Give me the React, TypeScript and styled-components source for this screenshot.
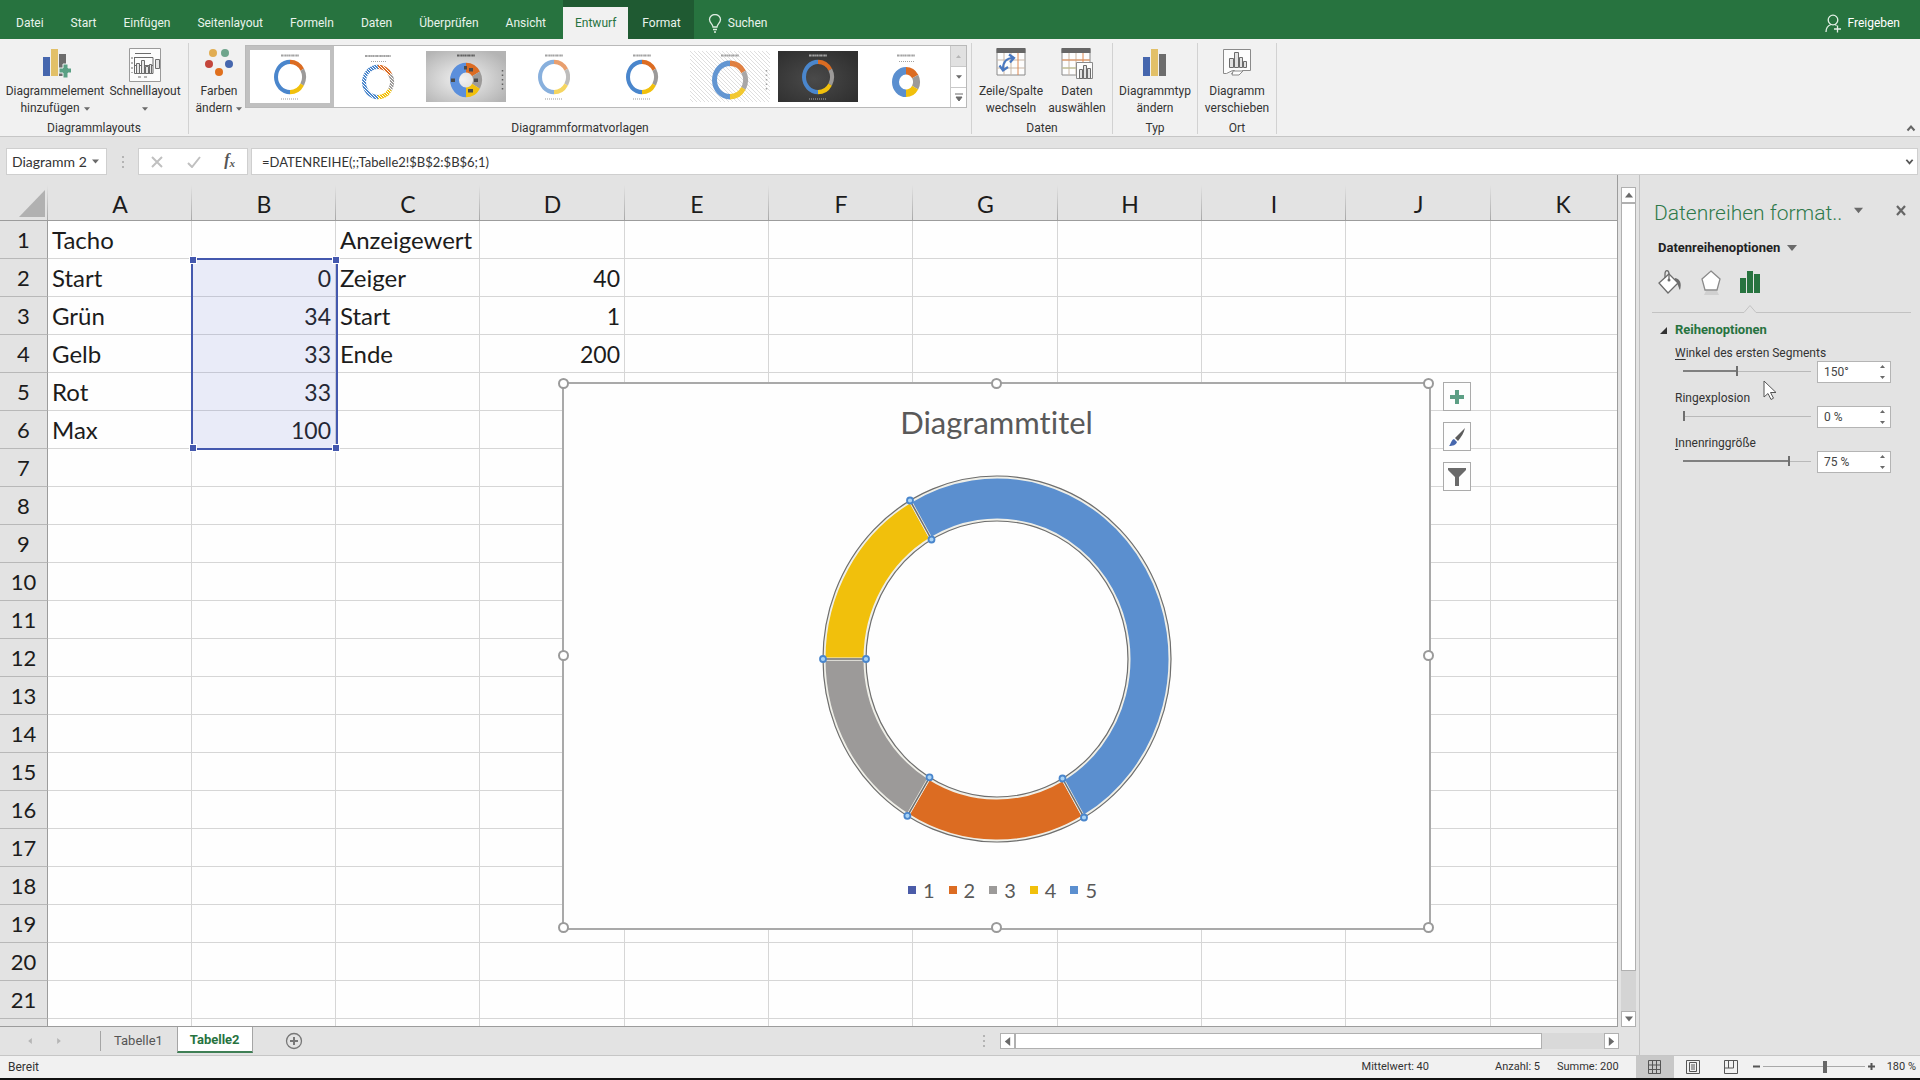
import React, { useState } from 'react';
import styled, { createGlobalStyle, css } from 'styled-components';

const UI_FONT = `Roboto, "Open Sans", "Liberation Sans", sans-serif`;
const SHEET_FONT = `Lato, "Open Sans", "Liberation Sans", sans-serif`;

const color = {
  green: '#27733f',
  greenDark: '#1f5a32',
  ribbon: '#f1f1f1',
  chrome: '#e3e3e3',
  line: '#c6c6c6',
  lineDark: '#9c9c9c',
  grid: '#d6d6d6',
  text: '#333333',
  blue: '#5b8fcf',
  orange: '#dc6c22',
  grey: '#9c9a99',
  yellow: '#f1c00c',
  navy: '#4a5ba8',
};

const GlobalStyle = createGlobalStyle`
  * { box-sizing: border-box; }
  body { margin: 0; background: ${color.chrome}; }
  button, input { font: inherit; color: inherit; margin: 0; padding: 0; border: 0; background: none; border-radius: 0; outline: none; }
  svg { display: block; flex: none; }
`;

const Window = styled.div`
  display: flex;
  flex-direction: column;
  height: 100vh;
  min-height: 600px;
  font-family: ${UI_FONT};
  font-size: 12px;
  line-height: 16px;
  font-variant-ligatures: none;
  color: ${color.text};
  overflow: hidden;
`;

/* ---------- tab bar ---------- */
const TabBar = styled.header`
  display: flex;
  height: 39px;
  flex: none;
  background: ${color.green};
  color: #e9f3ec;
`;
const Tabs = styled.nav`
  display: flex;
  padding: 0 4px 0 2px;
`;
const Tab = styled.button<{ $active?: boolean }>`
  margin-top: 7px;
  padding: 0 13px 0 14px;
  ${p => p.$active && css`background: ${color.ribbon}; color: ${color.green}; padding: 0 12px;`}
`;
const ContextTabs = styled.div`
  display: flex;
  background: ${color.greenDark};
`;
const BarAction = styled.button<{ $right?: boolean }>`
  display: flex;
  align-items: center;
  gap: 6px;
  margin-top: 7px;
  padding: 0 20px 0 14px;
  ${p => p.$right && css`margin-left: auto; color: #ffffff;`}
`;

/* ---------- ribbon ---------- */
const Ribbon = styled.section`
  display: flex;
  flex: none;
  height: 98px;
  padding-top: 4px;
  background: ${color.ribbon};
  border-bottom: 1px solid ${color.line};
`;
const Group = styled.div`
  display: flex;
  flex-direction: column;
  justify-content: space-between;
  height: 91px;
  border-right: 1px solid #d2d2d2;
`;
const GroupBody = styled.div`
  display: flex;
  justify-content: center;
  padding: 0 4px;
`;
const GroupLabel = styled.div`
  text-align: center;
  height: 14px;
  line-height: 16px;
`;
const BigButton = styled.button<{ $width: number }>`
  display: flex;
  flex-direction: column;
  align-items: center;
  width: ${p => p.$width}px;
  padding-top: 5px;
  line-height: 17px;
  white-space: nowrap;
`;
const IconSlot = styled.span`
  display: flex;
  justify-content: center;
  height: 35px;
`;
const ButtonLine = styled.span`
  display: flex;
  align-items: center;
  justify-content: center;
  gap: 4px;
  height: 17px;
`;
const Gallery = styled.div`
  display: flex;
  height: 63px;
  margin-top: 2px;
  border: 1px solid #b9b9b9;
  background: #ffffff;
`;
const StyleItem = styled.button<{ $selected?: boolean }>`
  display: flex;
  align-items: center;
  justify-content: center;
  width: 88px;
  border: 4px solid ${p => (p.$selected ? '#c0c0c0' : 'transparent')};
`;
const GalleryNav = styled.div`
  display: grid;
  grid-template-rows: repeat(3, 1fr);
  width: 16px;
  border-left: 1px solid #c9c9c9;
`;
const NavButton = styled.button<{ $off?: boolean }>`
  display: flex;
  align-items: center;
  justify-content: center;
  background: ${p => (p.$off ? '#e1e1e1' : '#ffffff')};
  & + & { border-top: 1px solid #c9c9c9; }
`;
const RibbonEnd = styled.div`
  display: flex;
  align-items: flex-end;
  margin-left: auto;
  padding: 0 4px 4px 0;
`;

/* ---------- formula bar ---------- */
const FormulaBar = styled.section`
  display: flex;
  flex: none;
  height: 38px;
  padding: 11px 2px 0 6px;
  background: ${color.chrome};
  font-family: ${SHEET_FONT};
  font-size: 14px;
`;
const Field = styled.div`
  display: flex;
  align-items: center;
  height: 27px;
  background: #ffffff;
  border: 1px solid #cfcfcf;
`;
const NameBox = styled(Field)`
  width: 101px;
  padding: 0 6px 0 5px;
  input { width: 80px; }
`;
const Dots = styled.span`
  display: flex;
  flex-direction: column;
  justify-content: center;
  align-items: center;
  gap: 3px;
  width: 31px;
  &::before, &::after, i { content: ''; width: 2px; height: 2px; background: #b4b4b4; }
`;
const EntryButtons = styled(Field)`
  width: 110px;
  justify-content: space-between;
  padding: 0 12px;
`;
const FxButton = styled.button`
  font-family: "Liberation Serif", serif;
  font-style: italic;
  font-weight: 700;
  font-size: 16px;
  color: #555555;
  sub { font-size: 11px; vertical-align: -2px; }
`;
const FormulaField = styled(Field)`
  flex: 1;
  margin-left: 3px;
  padding: 0 3px 0 10px;
  font-size: 13px;
  input { flex: 1; }
`;

/* ---------- workspace ---------- */
const Workspace = styled.main`
  display: flex;
  flex: 1;
  min-height: 0;
  background: ${color.chrome};
`;
const Book = styled.div`
  display: flex;
  flex-direction: column;
  flex: 1;
  min-width: 0;
`;
const BookTop = styled.div`
  display: flex;
  flex: 1;
  min-height: 0;
`;
const Sheet = styled.div`
  position: relative;
  flex: 1;
  min-width: 0;
  overflow: hidden;
  border-right: 1px solid ${color.lineDark};
  border-bottom: 1px solid ${color.lineDark};
`;
const Grid = styled.table`
  width: 100%;
  min-width: 1635px;
  table-layout: fixed;
  border-collapse: separate;
  border-spacing: 0;
  font-family: ${SHEET_FONT};
  font-size: 23px;
  line-height: 30px;
  color: #1c1c1c;
  thead th {
    height: 46px;
    padding: 12px 0 0;
    border-bottom: 1px solid ${color.lineDark};
    background:
      linear-gradient(to bottom, transparent 10px, #a8a8a8) right / 1px 100% no-repeat,
      ${color.chrome};
  }
  th { font-weight: 400; text-align: center; }
  tbody th {
    height: 38px;
    padding: 1px 0 0;
    font-size: 22px;
    background: ${color.chrome};
    border-right: 1px solid ${color.lineDark};
    border-bottom: 1px solid #b8b8b8;
  }
`;
const Cell = styled.td<{ $num?: boolean }>`
  height: 38px;
  padding: 1px 4px 0;
  background: #fefefe;
  border-right: 1px solid ${color.grid};
  border-bottom: 1px solid ${color.grid};
  font-size: ${p => (p.$num ? 23 : 24)}px;
  text-align: ${p => (p.$num ? 'right' : 'left')};
  white-space: nowrap;
`;
const Corner = styled.svg`
  margin: 0 3px 0 auto;
`;
const RangeMark = styled.div`
  position: absolute;
  left: 191px;
  top: 83px;
  width: 147px;
  height: 192px;
  border: 2px solid #4458ae;
  background: rgba(90, 110, 210, 0.13);
`;
const Knob = styled.i<{ $x: string; $y: string }>`
  position: absolute;
  left: ${p => p.$x};
  top: ${p => p.$y};
  width: 6px;
  height: 6px;
  margin: -3px 0 0 -3px;
  background: #4458ae;
  outline: 1px solid #ffffff;
`;

/* ---------- chart object ---------- */
const ChartObject = styled.figure`
  position: absolute;
  left: 562px;
  top: 207px;
  width: 869px;
  height: 548px;
  margin: 0;
  padding-top: 17px;
  display: flex;
  flex-direction: column;
  align-items: center;
  background: #fefefe;
  border: 2px solid #a9a9a9;
  font-family: ${SHEET_FONT};
  color: #595959;
`;
const ChartTitle = styled.figcaption`
  height: 42px;
  font-size: 31px;
  line-height: 42px;
`;
const ChartPlot = styled.svg`
  margin-top: 27px;
`;
const Legend = styled.ul`
  display: flex;
  gap: 14px;
  margin: 28px 0 0;
  padding: 0 0 0 12px;
  list-style: none;
  font-size: 20px;
  line-height: 28px;
`;
const LegendItem = styled.li<{ $color: string }>`
  display: flex;
  align-items: center;
  gap: 7px;
  &::before { content: ''; width: 8px; height: 8px; background: ${p => p.$color}; }
`;
const Handle = styled.i<{ $x: string; $y: string }>`
  position: absolute;
  left: ${p => p.$x};
  top: ${p => p.$y};
  width: 11px;
  height: 11px;
  margin: -6px 0 0 -6px;
  border: 2px solid #9a9a9a;
  border-radius: 50%;
  background: #ffffff;
`;
const ChartTools = styled.div`
  position: absolute;
  left: 1443px;
  top: 207px;
  display: grid;
  gap: 11px;
`;
const ChartTool = styled.button`
  display: flex;
  align-items: center;
  justify-content: center;
  width: 28px;
  height: 29px;
  background: #fefefe;
  border: 1px solid #ababab;
`;

/* ---------- scroll bars ---------- */
const VScroll = styled.div`
  display: flex;
  flex-direction: column;
  width: 15px;
  margin: 12px 3px 0;
  background: #d4d4d4;
`;
const ScrollButton = styled.button`
  display: flex;
  align-items: center;
  justify-content: center;
  width: 15px;
  height: 16px;
  flex: none;
  background: #ffffff;
  border: 1px solid #b0b0b0;
`;
const Thumb = styled.div<{ $share: number }>`
  flex: ${p => p.$share};
  background: #ffffff;
  border: 1px solid #b0b0b0;
`;
const Rest = styled.div<{ $share: number }>`
  flex: ${p => p.$share};
`;
const SheetBar = styled.div`
  display: flex;
  align-items: center;
  height: 28px;
  flex: none;
`;
const SheetNav = styled.div`
  display: flex;
  align-items: center;
  gap: 23px;
  width: 101px;
  height: 20px;
  padding-left: 27px;
  border-right: 1px solid #a5a5a5;
`;
const SheetTab = styled.button<{ $active?: boolean }>`
  height: 24px;
  padding: 0 14px 0 13px;
  font-size: 13px;
  color: #555555;
  ${p => p.$active && css`
    align-self: flex-start;
    height: 27px;
    margin-top: -1px;
    padding: 3px 12px 0;
    color: ${color.green};
    font-weight: 700;
    background: #ffffff;
    border: 1px solid #a5a5a5;
    border-width: 0 1px;
    border-bottom: 2px solid #3f7f55;
  `}
`;
const AddSheet = styled.button`
  margin-left: 32px;
`;
const HScroll = styled.div`
  display: flex;
  width: 619px;
  height: 16px;
  margin-left: auto;
  margin-right: 20px;
  background: #d9d9d9;
`;
const ScrollGrip = styled(Dots)`
  width: 32px;
  margin-left: auto;
  & + ${HScroll} { margin-left: 0; }
`;

/* ---------- format pane ---------- */
const Pane = styled.aside`
  position: relative;
  display: flex;
  flex-direction: column;
  width: 281px;
  flex: none;
  padding: 22px 9px 0 12px;
  border-left: 1px solid #c2c2c2;
`;
const PaneHead = styled.div`
  display: flex;
  align-items: center;
  height: 32px;
  padding-left: 2px;
`;
const PaneTitle = styled.h2`
  margin: 0;
  width: 200px;
  font-size: 21px;
  line-height: 32px;
  font-weight: 300;
  color: #2f7a4b;
  white-space: nowrap;
`;
const CloseButton = styled.button`
  margin: 0 5px 6px auto;
`;
const TitleMenu = styled.button`
  margin-bottom: 6px;
`;
const OptionsMenu = styled.button`
  display: flex;
  align-items: center;
  gap: 7px;
  height: 16px;
  margin-top: 11px;
  padding-left: 6px;
  font-size: 13px;
  font-weight: 700;
  color: #222222;
`;
const PaneIcons = styled.div`
  display: flex;
  gap: 15px;
  height: 26px;
  margin-top: 13px;
  padding-left: 6px;
`;
const Notch = styled.svg`
  width: 100%;
  margin-top: 9px;
`;
const Section = styled.button`
  display: flex;
  align-items: center;
  gap: 8px;
  margin-top: 9px;
  padding-left: 8px;
  font-size: 13px;
  font-weight: 700;
  color: ${color.green};
`;
const Option = styled.div`
  height: 45px;
  padding-left: 23px;
  label { display: block; height: 15px; line-height: 15px; }
  u { text-underline-offset: 2px; }
`;
const OptionRow = styled.div`
  display: flex;
  align-items: flex-start;
  gap: 6px;
  padding-left: 8px;
`;
const Options = styled.div`
  margin-top: 8px;
`;
const Slider = styled.input<{ $fill: number }>`
  appearance: none;
  width: 128px;
  height: 20px;
  background:
    linear-gradient(#808080, #808080) left center / ${p => p.$fill}% 2px no-repeat,
    linear-gradient(#b9b9b9, #b9b9b9) left center / 100% 1px no-repeat;
  &::-webkit-slider-thumb {
    appearance: none;
    width: 2px;
    height: 10px;
    background: #6f6f6f;
  }
`;
const Spin = styled.div`
  display: flex;
  align-items: center;
  width: 74px;
  height: 22px;
  background: #ffffff;
  border: 1px solid #b4b4b4;
  input { width: 52px; padding-left: 6px; color: #444444; }
`;
const SpinButtons = styled.div`
  display: grid;
  gap: 6px;
  margin-left: auto;
  margin-right: 5px;
`;
const Pointer = styled.svg`
  position: absolute;
  left: 123px;
  top: 205px;
`;

/* ---------- status bar ---------- */
const StatusBar = styled.footer`
  display: flex;
  align-items: center;
  flex: none;
  height: 25px;
  padding: 0 4px 1px 8px;
  background: ${color.ribbon};
  border-top: 1px solid ${color.line};
  border-bottom: 2px solid #111111;
`;
const Stats = styled.div`
  display: flex;
  margin-left: auto;
  margin-right: 17px;
  gap: 17px;
  font-size: 11px;
  span:first-child { margin-right: 49px; }
`;
const ViewButton = styled.button<{ $on?: boolean }>`
  display: flex;
  align-items: center;
  justify-content: center;
  width: 38px;
  height: 22px;
  background: ${p => (p.$on ? '#c8c8c8' : 'transparent')};
`;
const ZoomArea = styled.div`
  display: flex;
  align-items: center;
  gap: 2px;
  margin-left: 2px;
`;
const ZoomSlider = styled(Slider)`
  width: 102px;
  background: linear-gradient(#a9a9a9, #a9a9a9) left center / 100% 1px no-repeat;
  &::-webkit-slider-thumb { width: 4px; height: 12px; background: #666666; }
`;
const ZoomValue = styled.button`
  margin-left: 9px;
  font-size: 11px;
`;

/* ---------- small drawings ---------- */
const Arrow = ({ dir = 'down', size = 7, fill = '#6a6a6a' }: { dir?: string; size?: number; fill?: string }) => {
  const d: Record<string, string> = {
    down: 'M0 2h10L5 8z',
    up: 'M0 8h10L5 2z',
    left: 'M8 0v10L2 5z',
    right: 'M2 0v10l6-5z',
  };
  return <svg width={size} height={size} viewBox="0 0 10 10"><path d={d[dir]} fill={fill} /></svg>;
};

const polar = (cx: number, cy: number, rx: number, ry: number, deg: number) => {
  const a = (deg * Math.PI) / 180;
  return [cx + rx * Math.sin(a), cy - ry * Math.cos(a)];
};
const ringPath = (cx: number, cy: number, R: number[], r: number[], from: number, to: number) => {
  const big = to - from > 180 ? 1 : 0;
  const [a, b] = polar(cx, cy, R[0], R[1], from);
  const [c, d] = polar(cx, cy, R[0], R[1], to);
  const [e, f] = polar(cx, cy, r[0], r[1], to);
  const [g, h] = polar(cx, cy, r[0], r[1], from);
  return `M${a} ${b}A${R[0]} ${R[1]} 0 ${big} 1 ${c} ${d}L${e} ${f}A${r[0]} ${r[1]} 0 ${big} 0 ${g} ${h}Z`;
};

const slices = [
  { from: 150, to: 211, fill: color.orange },
  { from: 211, to: 270, fill: color.grey },
  { from: 270, to: 330, fill: color.yellow },
  { from: 330, to: 510, fill: color.blue },
];

const Doughnut = () => {
  const cx = 180, cy = 189, R = [174, 183], r = [131, 138];
  return (
    <ChartPlot width="360" height="378" viewBox="0 0 360 378" role="img" aria-label="Ringdiagramm">
      {slices.map(s => (
        <path key={s.from} d={ringPath(cx, cy, [R[0] - 1, R[1] - 1], [r[0] + 1, r[1] + 1], s.from, s.to)} fill={s.fill} stroke="#efefe8" strokeWidth="3" />
      ))}
      <g fill="none" stroke="#6e6e6e" strokeWidth="1.200">
        <ellipse cx={cx} cy={cy} rx={R[0]} ry={R[1]} />
        <ellipse cx={cx} cy={cy} rx={r[0]} ry={r[1]} />
      </g>
      {slices.map(s => {
        const [x1, y1] = polar(cx, cy, R[0], R[1], s.from);
        const [x2, y2] = polar(cx, cy, r[0], r[1], s.from);
        return (
          <g key={s.from} stroke="#4a86cc" strokeWidth="1.800" fill="#a9d3f5">
            <path d={`M${x1} ${y1}L${x2} ${y2}`} stroke="#6e6e6e" strokeWidth="1.500" />
            <circle cx={x1} cy={y1} r="3" />
            <circle cx={x2} cy={y2} r="3" />
          </g>
        );
      })}
    </ChartPlot>
  );
};

const thumbColors = [color.orange, color.grey, color.yellow, '#4a86cc'];
const thumbAngles = [[0, 61], [61, 120], [120, 180], [180, 360]];
type ThumbProps = { id: string; bg?: string; R?: number; r?: number; cy?: number; opacity?: number; hatch?: boolean; lines?: boolean; side?: boolean; labels?: boolean; sub?: boolean; ink?: string; blue?: string; foot?: boolean; bold?: boolean };
const Thumbnail = ({ id, bg = '#ffffff', R = 16, r = 12, cy = 26, opacity = 1, hatch, lines, side, labels, sub, ink = '#a2a2a2', blue, foot, bold }: ThumbProps) => (
  <svg width="80" height="51" viewBox="0 0 80 51">
    <defs>
      <radialGradient id={`${id}-g`} cx="0.45" cy="0.55" r="0.65">
        <stop offset="0" stopColor={bg === 'silver' ? '#f2f2f2' : '#4a4a4a'} />
        <stop offset="1" stopColor={bg === 'silver' ? '#b4b4b4' : '#303030'} />
      </radialGradient>
      <pattern id={`${id}-l`} width="4" height="4" patternUnits="userSpaceOnUse">
        <path d="M-1 -1L5 5M-1 3L1 5M3 -1L5 1" stroke="#d6d6d6" strokeWidth="0.8" />
      </pattern>
      <pattern id={`${id}-h`} width="3" height="3" patternUnits="userSpaceOnUse">
        <path d="M-1 -1L4 4M-1 2L1 4M2 -1L4 1" stroke="#ffffff" strokeWidth="1" />
      </pattern>
    </defs>
    <rect width="80" height="51" fill={bg === '#ffffff' ? bg : `url(#${id}-g)`} />
    {lines && <rect width="80" height="51" fill={`url(#${id}-l)`} />}
    <path d={bold ? 'M27 5h26' : 'M31 4.500h18'} stroke={ink} strokeWidth="2.200" strokeDasharray="2 0.4 1 0.3" />
    {sub && <path d="M33 10.500h15" stroke={ink} strokeWidth="1" strokeDasharray="1 1" />}
    <g opacity={opacity}>
      {thumbAngles.map(([a, b], i) => (
        <path key={a} d={ringPath(40, cy, [R, R * 1.08], [r, r * 1.08], a, b)} fill={i === 3 && blue ? blue : thumbColors[i]} />
      ))}
      {hatch && <path d={ringPath(40, cy, [R, R * 1.08], [r, r * 1.08], 150, 359)} fill={`url(#${id}-h)`} />}
      {hatch && <path d={ringPath(40, cy, [R, R * 1.08], [r, r * 1.08], 0, 150)} fill={`url(#${id}-h)`} />}
    </g>
    {labels && <path d="M25 27.500h4v3.500h-4zM48 27.500h4v3.500h-4zM42 38h5v3.500h-5zM38 15h3v3.500h-3zM43 17h4v3.500h-4z" fill="#4b4b4b" />}
    {side && <path d="M76.500 19v20" stroke={ink} strokeWidth="1.500" strokeDasharray="1.500 3" />}
    {foot && <path d="M31 48h18" stroke={ink} strokeWidth="1.300" strokeDasharray="1 1" opacity="0.7" />}
  </svg>
);

const AddElementIcon = () => (
  <svg width="32" height="32" viewBox="0 0 32 32">
    <path d="M4 9h7v19H4z" fill="#4667ae" /><path d="M12 1h7v27h-7z" fill="#e2c068" /><path d="M20 6h7v22h-7z" fill="#6c6c6c" />
    <path d="M20 20h4v-4h5v4h4v5h-4v5h-5v-5h-4z" fill="#5aa084" stroke="#f1f1f1" />
  </svg>
);
const TypeIcon = () => (
  <svg width="32" height="32" viewBox="0 0 32 32">
    <path d="M4 9h7v19H4z" fill="#4667ae" /><path d="M12 1h7v27h-7z" fill="#e2c068" /><path d="M20 6h7v22h-7z" fill="#6c6c6c" />
  </svg>
);
const LayoutIcon = () => (
  <svg width="32" height="34" viewBox="0 0 32 34" fill="none" stroke="#6b6b6b">
    <path d="M.5.5h31v33H.5z" fill="#fcfcfc" stroke="#9a9a9a" /><path d="M6 5.500h16M9 29h3M15 29h3M28 12v8M3 9v2M3 14v2M3 19v2M3 24v1" />
    <path d="M5.500 9v16.500H24M6 9.500h18v16M6 17.500h18" /><path d="M7.500 15.500h3v10h-3zM12.500 12.500h3v13h-3zM16.500 18.500h3v7h-3zM20.500 16.500h2v9h-2zM26.500 11.500h4v9h-4z" fill="#e6e6e6" />
  </svg>
);
const ColorsIcon = () => (
  <svg width="32" height="32" viewBox="0 0 32 32">
    <circle cx="10" cy="5" r="4" fill="#e1ad52" /><circle cx="22" cy="5" r="4" fill="#6fa58c" /><circle cx="6" cy="16" r="4" fill="#c4463b" />
    <circle cx="26" cy="16" r="4" fill="#4667ae" /><circle cx="16" cy="24" r="4" fill="#e0701d" />
  </svg>
);
const TableLines = () => (
  <>
    <path d="M1 1h28v26H1z" fill="#fdfdfd" stroke="#8a8a8a" /><path d="M.5 0h29v5H.5z" fill="#666666" />
    <path d="M8 5v22M1 12h28M1 20h28M15 5v22" stroke="#c9b7a6" fill="none" /><path d="M22 5v22" stroke="#de8850" />
  </>
);
const SwitchIcon = () => (
  <svg width="30" height="32" viewBox="0 0 30 32">
    <TableLines />
    <path d="M7 21c0-7 4-11 10-11M13 6.500l5 3.500-4 4.500M3.500 17.500l3.500 5 5-3.500" fill="none" stroke="#4a78c0" strokeWidth="2.200" />
  </svg>
);
const SelectDataIcon = () => (
  <svg width="32" height="32" viewBox="0 0 32 32">
    <TableLines />
    <path d="M1 12h28" stroke="#de8850" /><path d="M1 20h28" stroke="#b9c08a" />
    <path d="M15.500 14.500h16v16h-16z" fill="#fcfcfc" stroke="#8a8a8a" /><path d="M18.500 21.500h3v9h-3zM22.500 17.500h3v13h-3zM26.500 20.500h3v10h-3z" fill="#e2e2e2" stroke="#6b6b6b" />
  </svg>
);
const MoveIcon = () => (
  <svg width="30" height="32" viewBox="0 0 30 32">
    <path d="M1.500 1.500h27v21h-8l-3 3h-8l3-3h-2l-6 3h-3z" fill="#fcfcfc" stroke="#8a8a8a" /><path d="M11 23h10l-4 4h-7z" fill="#fcfcfc" stroke="#8a8a8a" />
    <path d="M7.500 10.500h4v9h-4zM12.500 4.500h4v15h-4zM17.500 9.500h3v10h-3zM21.500 13.500h3v6h-3z" fill="#e2e2e2" stroke="#6b6b6b" />
  </svg>
);

/* ---------- data ---------- */
const columns = ['A', 'B', 'C', 'D', 'E', 'F', 'G', 'H', 'I', 'J', 'K'];
const columnWidths = [144, 144, 144, 145, 144, 144, 145, 144, 144, 145];
const cells: Record<number, (string | number)[]> = {
  1: ['Tacho', '', 'Anzeigewert', ''],
  2: ['Start', 0, 'Zeiger', 40],
  3: ['Grün', 34, 'Start', 1],
  4: ['Gelb', 33, 'Ende', 200],
  5: ['Rot', 33, '', ''],
  6: ['Max', 100, '', ''],
};
const rowNumbers = Array.from({ length: 21 }, (_, i) => i + 1);
const legend = [color.navy, color.orange, color.grey, color.yellow, color.blue];
const handles = [['0', '0'], ['50%', '0'], ['100%', '0'], ['0', '50%'], ['100%', '50%'], ['0', '100%'], ['50%', '100%'], ['100%', '100%']];
const corners = [['0', '0'], ['100%', '0'], ['0', '100%'], ['100%', '100%']];

const SliderOption = ({ id, first, rest, start, max, unit }: { id: string; first: string; rest: string; start: number; max: number; unit: string }) => {
  const [value, setValue] = useState(start);
  const step = (n: number) => setValue(v => Math.min(max, Math.max(0, v + n)));
  return (
    <Option>
      <label htmlFor={id}>{id === 'explosion' ? first : <u>{first}</u>}{rest}</label>
      <OptionRow>
        <Slider id={id} type="range" min={0} max={max} value={value} $fill={Math.round((value / max) * 100)} onChange={e => setValue(Number(e.target.value))} />
        <Spin>
          <input type="text" aria-label={first + rest} value={`${value}${unit}`} readOnly />
          <SpinButtons>
            <button aria-label="Erhöhen" onClick={() => step(1)}><Arrow dir="up" size={5} /></button>
            <button aria-label="Verringern" onClick={() => step(-1)}><Arrow size={5} /></button>
          </SpinButtons>
        </Spin>
      </OptionRow>
    </Option>
  );
};

export default function App() {
  return (
    <Window>
      <GlobalStyle />
      <TabBar>
        <Tabs>
          {['Datei', 'Start', 'Einfügen', 'Seitenlayout', 'Formeln', 'Daten', 'Überprüfen', 'Ansicht'].map(t => <Tab key={t}>{t}</Tab>)}
        </Tabs>
        <ContextTabs>
          <Tab $active>Entwurf</Tab>
          <Tab>Format</Tab>
        </ContextTabs>
        <BarAction>
          <svg width="14" height="19" viewBox="0 0 14 19" fill="none" stroke="#dcebe0" strokeWidth="1.300"><path d="M5 13c0-3-3.500-4-3.500-7.500a5.500 5 0 0 1 11 0C12.500 9 9 10 9 13zM5 15.500h4M6 18h2" /></svg>
          Suchen
        </BarAction>
        <BarAction $right>
          <svg width="16" height="19" viewBox="0 0 16 19" fill="none" stroke="#e4f0e7" strokeWidth="1.300"><circle cx="8" cy="6" r="4.800" /><path d="M1 18c0-4 2-6.500 5-7.500M10 10.500l1.500 1M12.500 11.500v7M9 15h7" /></svg>
          Freigeben
        </BarAction>
      </TabBar>

      <Ribbon>
        <Group>
          <GroupBody>
            <BigButton $width={102}>
              <IconSlot><AddElementIcon /></IconSlot>
              <ButtonLine>Diagrammelement</ButtonLine>
              <ButtonLine>hinzufügen <Arrow size={6} /></ButtonLine>
            </BigButton>
            <BigButton $width={78}>
              <IconSlot><LayoutIcon /></IconSlot>
              <ButtonLine>Schnelllayout</ButtonLine>
              <ButtonLine><Arrow size={6} /></ButtonLine>
            </BigButton>
          </GroupBody>
          <GroupLabel>Diagrammlayouts</GroupLabel>
        </Group>
        <Group>
          <GroupBody>
            <BigButton $width={52}>
              <IconSlot><ColorsIcon /></IconSlot>
              <ButtonLine>Farben</ButtonLine>
              <ButtonLine>ändern <Arrow size={6} /></ButtonLine>
            </BigButton>
            <Gallery>
              <StyleItem $selected aria-label="Formatvorlage 1"><Thumbnail id="t1" foot /></StyleItem>
              <StyleItem aria-label="Formatvorlage 2"><Thumbnail id="t2" hatch bold sub cy={31} /></StyleItem>
              <StyleItem aria-label="Formatvorlage 3"><Thumbnail id="t3" bg="silver" r={7} cy={29} labels side ink="#5f5f5f" blue="#5b8fdc" /></StyleItem>
              <StyleItem aria-label="Formatvorlage 4"><Thumbnail id="t4" opacity={0.65} foot /></StyleItem>
              <StyleItem aria-label="Formatvorlage 5"><Thumbnail id="t5" foot /></StyleItem>
              <StyleItem aria-label="Formatvorlage 6"><Thumbnail id="t6" lines side R={18} r={13} cy={29} opacity={0.85} /></StyleItem>
              <StyleItem aria-label="Formatvorlage 7"><Thumbnail id="t7" bg="dark" ink="#a5a5a5" foot /></StyleItem>
              <StyleItem aria-label="Formatvorlage 8"><Thumbnail id="t8" R={14} r={7} cy={31} sub blue="#5b8fcf" /></StyleItem>
              <GalleryNav>
                <NavButton $off aria-label="Nach oben"><Arrow dir="up" size={5} fill="#b5b5b5" /></NavButton>
                <NavButton aria-label="Nach unten"><Arrow size={6} /></NavButton>
                <NavButton aria-label="Mehr"><svg width="8" height="9" viewBox="0 0 8 9"><path d="M0 1h8M1 4h6L4 8z" fill="#6a6a6a" stroke="#6a6a6a" /></svg></NavButton>
              </GalleryNav>
            </Gallery>
          </GroupBody>
          <GroupLabel>Diagrammformatvorlagen</GroupLabel>
        </Group>
        <Group>
          <GroupBody>
            <BigButton $width={70}><IconSlot><SwitchIcon /></IconSlot><ButtonLine>Zeile/Spalte</ButtonLine><ButtonLine>wechseln</ButtonLine></BigButton>
            <BigButton $width={62}><IconSlot><SelectDataIcon /></IconSlot><ButtonLine>Daten</ButtonLine><ButtonLine>auswählen</ButtonLine></BigButton>
          </GroupBody>
          <GroupLabel>Daten</GroupLabel>
        </Group>
        <Group>
          <GroupBody>
            <BigButton $width={76}><IconSlot><TypeIcon /></IconSlot><ButtonLine>Diagrammtyp</ButtonLine><ButtonLine>ändern</ButtonLine></BigButton>
          </GroupBody>
          <GroupLabel>Typ</GroupLabel>
        </Group>
        <Group>
          <GroupBody>
            <BigButton $width={70}><IconSlot><MoveIcon /></IconSlot><ButtonLine>Diagramm</ButtonLine><ButtonLine>verschieben</ButtonLine></BigButton>
          </GroupBody>
          <GroupLabel>Ort</GroupLabel>
        </Group>
        <RibbonEnd>
          <button aria-label="Menüband reduzieren"><svg width="10" height="8" viewBox="0 0 10 8"><path d="M1.500 6.500L5 2.500l3.500 4" fill="none" stroke="#666666" strokeWidth="2" /></svg></button>
        </RibbonEnd>
      </Ribbon>

      <FormulaBar>
        <NameBox>
          <input aria-label="Namenfeld" defaultValue="Diagramm 2" />
          <Arrow size={7} />
        </NameBox>
        <Dots><i /></Dots>
        <EntryButtons>
          <button aria-label="Abbrechen"><svg width="12" height="12" viewBox="0 0 12 12"><path d="M1 1l10 10M11 1L1 11" stroke="#c0c0c0" strokeWidth="2" /></svg></button>
          <button aria-label="Eingeben"><svg width="14" height="12" viewBox="0 0 14 12"><path d="M1 7l4 4 8-10" fill="none" stroke="#c0c0c0" strokeWidth="2" /></svg></button>
          <FxButton aria-label="Funktion einfügen">f<sub>x</sub></FxButton>
        </EntryButtons>
        <FormulaField>
          <input aria-label="Formel" defaultValue="=DATENREIHE(;;Tabelle2!$B$2:$B$6;1)" />
          <svg width="9" height="8" viewBox="0 0 10 8"><path d="M1.500 1.500L5 5.500l3.500-4" fill="none" stroke="#555555" strokeWidth="2" /></svg>
        </FormulaField>
      </FormulaBar>

      <Workspace>
        <Book>
          <BookTop>
            <Sheet>
              <Grid>
                <colgroup>
                  <col width={48} />
                  {columnWidths.map((w, i) => <col key={i} width={w} />)}
                  <col />
                </colgroup>
                <thead>
                  <tr>
                    <th aria-label="Alles auswählen"><Corner width="26" height="27" viewBox="0 0 26 27"><path d="M26 0v27H0z" fill="#b1b1b1" /></Corner></th>
                    {columns.map(c => <th key={c} scope="col">{c}</th>)}
                  </tr>
                </thead>
                <tbody>
                  {rowNumbers.map(n => (
                    <tr key={n}>
                      <th scope="row">{n}</th>
                      {columns.map((c, i) => {
                        const v = cells[n]?.[i] ?? '';
                        return <Cell key={c} $num={typeof v === 'number'}>{v}</Cell>;
                      })}
                    </tr>
                  ))}
                  <tr>
                    <th />
                    {columns.map(c => <Cell key={c} />)}
                  </tr>
                </tbody>
              </Grid>
              <RangeMark>{corners.map(([x, y]) => <Knob key={x + y} $x={x} $y={y} />)}</RangeMark>
              <ChartObject>
                <ChartTitle>Diagrammtitel</ChartTitle>
                <Doughnut />
                <Legend>{legend.map((c, i) => <LegendItem key={c} $color={c}>{i + 1}</LegendItem>)}</Legend>
                {handles.map(([x, y]) => <Handle key={x + y} $x={x} $y={y} />)}
              </ChartObject>
              <ChartTools>
                <ChartTool aria-label="Diagrammelemente"><svg width="14" height="14" viewBox="0 0 14 14"><path d="M5 0h4v5h5v4H9v5H5V9H0V5h5z" fill="#5d9f85" /></svg></ChartTool>
                <ChartTool aria-label="Diagrammformatvorlagen"><svg width="18" height="20" viewBox="0 0 18 20"><path d="M17 1L7 11l3 3c3-4 6-8 7-13z" fill="#5c5c5c" /><path d="M6 12l3 3c-1 3-4 4-8 4 2-2 2-6 5-7z" fill="#4667ae" /></svg></ChartTool>
                <ChartTool aria-label="Diagrammfilter"><svg width="18" height="18" viewBox="0 0 18 18"><path d="M0 0h18v2l-7 7v9H7V9L0 2z" fill="#6a6a6a" /></svg></ChartTool>
              </ChartTools>
            </Sheet>
            <VScroll>
              <ScrollButton aria-label="Nach oben"><Arrow dir="up" size={8} /></ScrollButton>
              <Thumb $share={768} />
              <Rest $share={40} />
              <ScrollButton aria-label="Nach unten"><Arrow size={8} /></ScrollButton>
            </VScroll>
          </BookTop>
          <SheetBar>
            <SheetNav>
              <button aria-label="Vorheriges Blatt"><Arrow dir="left" size={6} fill="#b5b5b5" /></button>
              <button aria-label="Nächstes Blatt"><Arrow dir="right" size={6} fill="#b5b5b5" /></button>
            </SheetNav>
            <SheetTab>Tabelle1</SheetTab>
            <SheetTab $active>Tabelle2</SheetTab>
            <AddSheet aria-label="Neues Blatt"><svg width="18" height="18" viewBox="0 0 18 18" fill="none" stroke="#777777"><circle cx="9" cy="9" r="7.500" strokeWidth="1.300" /><path d="M9 5v8M5 9h8" strokeWidth="2" /></svg></AddSheet>
            <ScrollGrip><i /></ScrollGrip>
            <HScroll>
              <ScrollButton aria-label="Nach links"><Arrow dir="left" size={9} /></ScrollButton>
              <Thumb $share={527} />
              <Rest $share={62} />
              <ScrollButton aria-label="Nach rechts"><Arrow dir="right" size={9} /></ScrollButton>
            </HScroll>
          </SheetBar>
        </Book>

        <Pane>
          <PaneHead>
            <PaneTitle>Datenreihen format..</PaneTitle>
            <TitleMenu aria-label="Bereichsoptionen"><Arrow size={9} /></TitleMenu>
            <CloseButton aria-label="Schließen"><svg width="10" height="11" viewBox="0 0 10 11"><path d="M1 1l8 9M9 1l-8 9" stroke="#666666" strokeWidth="2.200" /></svg></CloseButton>
          </PaneHead>
          <OptionsMenu>Datenreihenoptionen <Arrow size={10} /></OptionsMenu>
          <PaneIcons>
            <button aria-label="Füllung und Linie">
              <svg width="25" height="26" viewBox="0 0 25 26"><path d="M17 9c5 1 7 5 5 12-2-3-1-6-6-9z" fill="#6c6c6c" /><path d="M11 5l9 9-10 10-9-10z" fill="#ffffff" stroke="#6c6c6c" strokeWidth="1.300" /><path d="M7 9V5c0-5 4-4 4 0v6" fill="none" stroke="#6c6c6c" strokeWidth="1.300" /><circle cx="11" cy="11" r="1.500" fill="#6c6c6c" /></svg>
            </button>
            <button aria-label="Effekte">
              <svg width="26" height="26" viewBox="0 0 26 26"><path d="M8 22h11l2 4H6z" fill="#d0d0d0" /><path d="M13 2l9 8-3 11H7L4 10z" fill="#ffffff" stroke="#8a8a8a" strokeWidth="1.300" /></svg>
            </button>
            <button aria-label="Datenreihenoptionen">
              <svg width="22" height="26" viewBox="0 0 22 26"><path d="M1 9h6v15H1zM8 2h6v22H8zM15 5h6v19h-6z" fill="#27733f" /></svg>
            </button>
          </PaneIcons>
          <Notch height="9" viewBox="0 0 259 9"><path d="M0 8.500h92l6-7 6 7h155" fill="none" stroke="#c2c2c2" /></Notch>
          <Section>
            <svg width="7" height="7" viewBox="0 0 7 7"><path d="M7 0v7H0z" fill="#333333" /></svg>
            Reihenoptionen
          </Section>
          <Options>
            <SliderOption id="angle" first="W" rest="inkel des ersten Segments" start={150} max={360} unit="°" />
            <SliderOption id="explosion" first="R" rest="ingexplosion" start={0} max={400} unit=" %" />
            <SliderOption id="hole" first="I" rest="nnenringgröße" start={75} max={90} unit=" %" />
          </Options>
          <Pointer width="14" height="21" viewBox="0 0 14 21"><path d="M1 1v16l4-3.500 3 6 2.500-1.300-3-5.700H13z" fill="#ffffff" stroke="#555555" /></Pointer>
        </Pane>
      </Workspace>

      <StatusBar>
        <span>Bereit</span>
        <Stats><span>Mittelwert: 40</span><span>Anzahl: 5</span><span>Summe: 200</span></Stats>
        <ViewButton $on aria-label="Normal"><svg width="13" height="14" viewBox="0 0 13 14" fill="none" stroke="#555555"><path d="M.5.5h12v13H.5zM4.500 0v14M8.500 0v14M0 5h13M0 9.500h13" /></svg></ViewButton>
        <ViewButton aria-label="Seitenlayout"><svg width="14" height="14" viewBox="0 0 14 14" fill="none" stroke="#555555"><path d="M.5.5h13v13H.5zM3.500 2.500h7v9h-7zM5 5h4M5 7h4M5 9h4" /></svg></ViewButton>
        <ViewButton aria-label="Umbruchvorschau"><svg width="14" height="14" viewBox="0 0 14 14" fill="none" stroke="#555555"><path d="M.5.5h13v13H.5zM4.500 0v8M9.500 0v8H1M9 8" /></svg></ViewButton>
        <ZoomArea>
          <button aria-label="Verkleinern"><svg width="9" height="9" viewBox="0 0 9 9"><path d="M1 4.500h7" stroke="#555555" strokeWidth="2" /></svg></button>
          <ZoomSlider type="range" aria-label="Zoom" min={0} max={100} defaultValue={62} $fill={0} />
          <button aria-label="Vergrößern"><svg width="9" height="9" viewBox="0 0 9 9"><path d="M1 4.500h7M4.500 1v7" stroke="#555555" strokeWidth="2" /></svg></button>
          <ZoomValue>180 %</ZoomValue>
        </ZoomArea>
      </StatusBar>
    </Window>
  );
}
